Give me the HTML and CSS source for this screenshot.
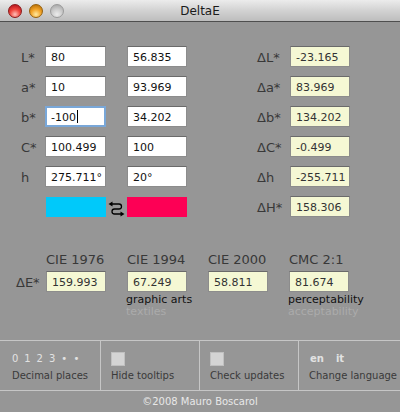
FILE: index.html
```html
<!DOCTYPE html>
<html lang="en">
<head>
    <meta charset="UTF-8">
    <title>DeltaE</title>
    <link rel="stylesheet" href="styles.css">
</head>
<body>
    <div class="window">
        <div class="titlebar">
            <div class="lights">
                <span class="light red"></span>
                <span class="light amber"></span>
                <span class="light off"></span>
            </div>
            <div class="title">DeltaE</div>
        </div>

        <div class="form">
            <div class="row">
                <span class="lab">L*</span>
                <span class="field">80</span>
                <span class="field second">56.835</span>
                <span class="dlab">ΔL*</span>
                <span class="field out">-23.165</span>
            </div>
            <div class="row">
                <span class="lab">a*</span>
                <span class="field">10</span>
                <span class="field second">93.969</span>
                <span class="dlab">Δa*</span>
                <span class="field out">83.969</span>
            </div>
            <div class="row">
                <span class="lab">b*</span>
                <span class="field focus">-100<i class="caret"></i></span>
                <span class="field second">34.202</span>
                <span class="dlab">Δb*</span>
                <span class="field out">134.202</span>
            </div>
            <div class="row">
                <span class="lab">C*</span>
                <span class="field">100.499</span>
                <span class="field second">100</span>
                <span class="dlab">ΔC*</span>
                <span class="field out">-0.499</span>
            </div>
            <div class="row">
                <span class="lab">h</span>
                <span class="field">275.711°</span>
                <span class="field second">20°</span>
                <span class="dlab">Δh</span>
                <span class="field out">-255.711</span>
            </div>
            <div class="row">
                <span class="lab"></span>
                <span class="swatch cyan"></span>
                <span class="swap">
                    <svg width="17" height="18" viewBox="0 0 17 18">
                        <path d="M3 5 H11 Q13.5 5 13.5 7.5 Q13.5 10 11 10 H6.5 Q4 10 4 12.5 Q4 15 6.5 15 H13.5" fill="none" stroke="#000" stroke-width="1.3"/>
                        <path d="M0.5 5 L4.5 2.5 L4.5 7.5 Z" fill="#000"/>
                        <path d="M16.5 15 L12.5 12.5 L12.5 17.5 Z" fill="#000"/>
                    </svg>
                </span>
                <span class="swatch pink"></span>
                <span class="dlab">ΔH*</span>
                <span class="field out">158.306</span>
            </div>

            <div class="cie">
                <span></span>
                <span class="head">CIE 1976</span>
                <span class="head">CIE 1994</span>
                <span class="head">CIE 2000</span>
                <span class="head">CMC 2:1</span>

                <span class="lab de">ΔE*</span>
                <span class="field out">159.993</span>
                <span class="field out">67.249</span>
                <span class="field out">58.811</span>
                <span class="field out">81.674</span>

                <span></span>
                <span></span>
                <span class="notes"><b>graphic arts</b><em>textiles</em></span>
                <span></span>
                <span class="notes"><b>perceptability</b><em>acceptability</em></span>
            </div>
        </div>

        <div class="toolbar">
            <div class="cell">
                <div class="top digits"><span>0</span><span>1</span><span>2</span><span>3</span><span>•</span><span>•</span></div>
                <div class="caption">Decimal places</div>
            </div>
            <div class="cell">
                <div class="top"><span class="check"></span></div>
                <div class="caption">Hide tooltips</div>
            </div>
            <div class="cell">
                <div class="top"><span class="check"></span></div>
                <div class="caption">Check updates</div>
            </div>
            <div class="cell">
                <div class="top langs"><span>en</span><span>it</span></div>
                <div class="caption">Change language</div>
            </div>
        </div>

        <div class="footer">©2008 Mauro Boscarol</div>
    </div>
</body>
</html>
```

FILE: styles.css
```css
body {
    margin: 0;
    font-family: "DejaVu Sans", Verdana, sans-serif;
    background: #969696;
}
.window {
    width: 400px;
    height: 412px;
    background: #969696;
    overflow: hidden;
}

/* title bar */
.titlebar {
    height: 21px;
    border-bottom: 1px solid #4e4e4e;
    background: linear-gradient(#ececec, #d2d2d2 50%, #bdbdbd);
    position: relative;
}
.lights {
    position: absolute;
    left: 8px;
    top: 4px;
    display: flex;
    gap: 7px;
}
.light {
    width: 14px;
    height: 14px;
    border-radius: 50%;
    box-sizing: border-box;
}
.red {
    background: radial-gradient(circle at 50% 78%, #ffc0b8, #f0463c 45%, #b3121c 90%);
    border: 1px solid #8a1a1a;
}
.amber {
    background: radial-gradient(circle at 50% 78%, #ffeaa0, #f3a52a 45%, #b86f05 90%);
    border: 1px solid #96600c;
}
.off {
    background: radial-gradient(circle at 50% 78%, #ececec, #cdcdcd 45%, #a8a8a8 90%);
    border: 1px solid #9a9a9a;
}
.title {
    text-align: center;
    font-size: 12px;
    line-height: 21px;
    color: #1a1a1a;
    padding-top: 1px;
}

/* fields */
.form {
    padding: 24px 0 0 21px;
    height: 294px;
}
.row {
    display: flex;
    align-items: center;
    height: 21px;
    margin-bottom: 9px;
}
.lab, .dlab {
    font-size: 13px;
    color: #383838;
    line-height: 21px;
    padding-top: 1px;
}
.lab {
    width: 24px;
}
.dlab {
    width: 33px;
    margin-left: 70px;
}
.field {
    display: block;
    box-sizing: border-box;
    width: 61px;
    height: 21px;
    padding: 2px 0 0 5px;
    line-height: 17px;
    font-size: 11px;
    color: #111;
    background: #fff;
    border: 1px solid #8c8c8c;
    border-top-color: #6a6a6a;
    white-space: nowrap;
}
.field.second {
    width: 60px;
    margin-left: 21px;
}
.field.out {
    width: 60px;
    background: #f5f8d4;
    color: #333;
}
.field.focus {
    border: 2px solid #79a7d8;
    padding: 1px 0 0 4px;
}
.caret {
    display: inline-block;
    width: 1px;
    height: 13px;
    background: #000;
    vertical-align: -2px;
    margin-left: 1px;
}
.swatch {
    width: 61px;
    height: 20px;
    margin-top: 1px;
}
.swatch.cyan {
    background: #00c9fa;
    margin-left: 1px;
    width: 60px;
}
.swatch.pink {
    background: #fd0055;
    width: 60px;
}
.swap {
    width: 21px;
    display: flex;
    justify-content: center;
    margin-top: 2px;
}

/* colour difference formulas */
.cie {
    margin: 35px 0 0 -5px;
    display: grid;
    grid-template-columns: 30px 81px 81px 81px 60px;
    grid-template-rows: 16px 21px auto;
    row-gap: 3px;
}
.head {
    font-size: 13px;
    line-height: 16px;
    color: #383838;
}
.de {
    width: auto;
}
.cie .field.out {
    width: 60px;
}
.notes {
    margin-top: -1px;
    font-size: 11px;
    line-height: 12px;
    margin-left: -1px;
}
.notes b, .notes em {
    display: block;
    font-weight: normal;
    font-style: normal;
}
.notes b {
    color: #111;
}
.notes em {
    color: #ababab;
}

/* bottom toolbar */
.toolbar {
    display: flex;
    border-top: 1px solid #c6c6c6;
    border-bottom: 1px solid #c6c6c6;
}
.cell {
    width: 99px;
    height: 49px;
    padding: 10px 0 0 10px;
    box-sizing: border-box;
    border-left: 1px solid #c6c6c6;
}
.cell:first-child {
    width: 100px;
    border-left: none;
    padding-left: 12px;
}
.top {
    height: 15px;
    display: flex;
    align-items: center;
    font-size: 10px;
    color: #e2e2e2;
}
.digits span {
    width: 12.3px;
}
.langs span {
    font-weight: bold;
    margin-right: 11px;
    margin-left: 1px;
}
.check {
    width: 14px;
    height: 14px;
    background: #d4d4d4;
    border: 1px solid #c0c0c0;
    box-sizing: border-box;
}
.caption {
    margin-top: 4px;
    font-size: 10px;
    line-height: 12px;
    color: #3a3a3a;
    white-space: nowrap;
}
.footer {
    height: 21px;
    line-height: 21px;
    text-align: center;
    font-size: 10px;
    color: #e8e8e8;
}
```
